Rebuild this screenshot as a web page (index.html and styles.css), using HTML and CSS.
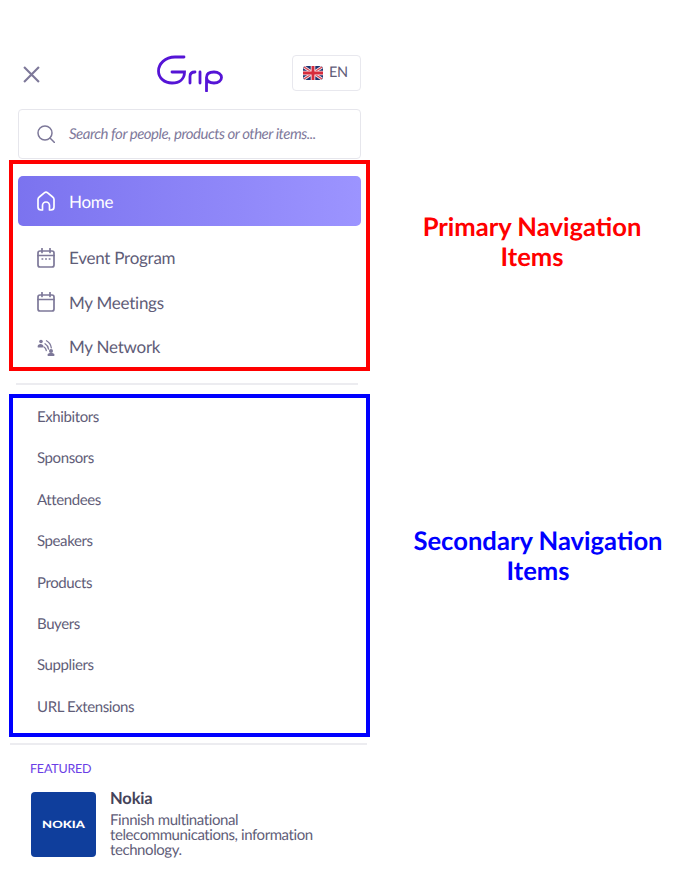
FILE: index.html
```html
<!DOCTYPE html>
<html lang="en">
<head>
<meta charset="utf-8">
<title>Grip navigation</title>
<link rel="stylesheet" href="styles.css">
</head>
<body>
<div class="page">
  <header class="top">
    <svg class="close" viewBox="0 0 16 16" width="17" height="17"><path d="M1 1l14 14M15 1L1 15"/></svg>
    <svg class="logo" viewBox="0 0 66 38" width="66" height="38" role="img" aria-label="Grip">
      <path d="M27 3H18C8 3 1.500 10 1.500 17C1.500 24 7.500 29 15 29C22.500 29 27.500 25 27.500 18H15"/>
      <path d="M33 29V22.500C33 19.500 35 18 38 18"/>
      <path d="M43 18V29"/>
      <path d="M49.500 37V23.500C49.500 20 52.500 18 57 18C61.500 18 64.500 20.500 64.500 23.500C64.500 26.500 61.500 29 57 29C53 29 50 27 49.500 24"/>
    </svg>
    <button class="lang">
      <svg class="flag" viewBox="0 0 20 14" width="20" height="14">
        <rect width="20" height="14" rx="3" fill="#1f3470"/>
        <path d="M1 1l18 12M19 1L1 13" stroke="#f6e4e8" stroke-width="3"/>
        <path d="M1 1l18 12M19 1L1 13" stroke="#d8414f" stroke-width="1.200"/>
        <path d="M10 0v14M0 7h20" stroke="#f6e4e8" stroke-width="4.600"/>
        <path d="M10 0v14M0 7h20" stroke="#d62c3c" stroke-width="2.800"/>
      </svg>
      <span>EN</span>
    </button>
  </header>

  <div class="search">
    <svg class="search-icon" viewBox="0 0 18 18" width="18" height="18"><circle cx="8" cy="8" r="7"/><path d="M13 13l4.500 4.500"/></svg>
    <span class="search-text">Search for people, products or other items...</span>
  </div>

  <div class="band">
    <nav class="primary">
      <a class="item home">
        <svg class="ico" viewBox="0 0 18 20" width="18" height="20"><path d="M5.500 19H4C2.300 19 1 17.700 1 16V8.500C1 7.500 1.500 6.600 2.300 6L7.300 1.800C8.300 1 9.700 1 10.700 1.800L15.700 6C16.500 6.600 17 7.500 17 8.500V16C17 17.700 15.700 19 14 19H12.500V14.500C12.500 12.600 11 11 9 11C7 11 5.500 12.600 5.500 14.500Z"/></svg>
        <span>Home</span>
      </a>
      <a class="item">
        <svg class="ico" viewBox="0 0 18 20" width="18" height="20"><rect x="1" y="3" width="16" height="16" rx="2"/><path d="M1 7.500h16M5 .5v4M13 .5v4"/><path class="dots" d="M4.500 11h1.800M8.100 11h1.800M11.700 11h1.800"/></svg>
        <span>Event Program</span>
      </a>
      <a class="item">
        <svg class="ico" viewBox="0 0 18 20" width="18" height="20"><rect x="1" y="3" width="16" height="16" rx="2"/><path d="M1 7.500h16M5 .5v4M13 .5v4"/></svg>
        <span>My Meetings</span>
      </a>
      <a class="item">
        <svg class="ico net" viewBox="0 -1 18 20" width="18" height="20">
          <circle cx="4" cy="3.500" r="1.800"/>
          <circle cx="14" cy="13" r="2"/>
          <path class="fill" d="M.6 8.800C.6 7 2 6 3.500 6C5 6 6.500 7 6.500 8.500C6.500 9 6 9.400 5.500 9.400H1.500C1 9.700 .6 9.400 .6 8.800Z"/>
          <path class="fill" d="M10.500 17C10.500 15.600 12 15 14 15C16 15 17.500 15.600 17.500 17C17.500 17.700 17 18 16.500 18H11.500C11 18 10.500 17.700 10.500 17Z"/>
          <path class="arc" d="M7 9C8.300 9.800 9 11 9.300 12.500M8 5.800C10 7 11.200 9 11.500 11M9.500 2.800C12.200 4.300 13.900 7 14.300 9.800"/>
        </svg>
        <span class="item-label">My Network</span>
      </a>
    </nav>
    <h2 class="note note-red">Primary Navigation Items</h2>
  </div>

  <hr class="rule rule-a">

  <div class="band">
    <nav class="secondary">
      <a>Exhibitors</a>
      <a>Sponsors</a>
      <a>Attendees</a>
      <a>Speakers</a>
      <a>Products</a>
      <a>Buyers</a>
      <a>Suppliers</a>
      <a>URL Extensions</a>
    </nav>
    <h2 class="note note-blue">Secondary Navigation Items</h2>
  </div>

  <hr class="rule rule-b">

  <section class="featured">
    <div class="featured-label">FEATURED</div>
    <div class="card">
      <div class="brand"><span class="brand-word">NOKIA</span></div>
      <div class="card-text">
        <div class="card-title">Nokia</div>
        <div class="card-desc">Finnish multinational telecommunications, information technology.</div>
      </div>
    </div>
  </section>
</div>
</body>
</html>
```

FILE: styles.css
```css
* { box-sizing: border-box; }
html, body { margin: 0; padding: 0; background: #fff; }
body { font-family: Lato, "Liberation Sans", sans-serif; color: #5f5d78; text-rendering: geometricPrecision; }
.page { width: 688px; height: 882px; padding-top: 55px; overflow: hidden; }

.top { display: flex; align-items: center; width: 338px; height: 36px; margin-left: 23px; }
.close { flex: none; fill: none; stroke: #7d7899; stroke-width: 2; margin-top: 2px; }
.logo { flex: none; fill: none; stroke: #5514d6; stroke-width: 2.800; stroke-linecap: round; margin: -1px 69px 0 117px; }
.lang { display: flex; align-items: center; gap: 6px; width: 69px; height: 36px; padding: 0 0 2px 10px; background: #fff; border: 1px solid #e8e8ee; border-radius: 4px; font: 14.500px Lato, sans-serif; letter-spacing: -.3px; color: #5f5d78; text-rendering: geometricPrecision; }
.flag { margin-top: 2px; }

.search { display: flex; align-items: center; gap: 14px; width: 343px; height: 50px; margin: 18px 0 1px 18px; padding-left: 18px; border: 1px solid #e6e6ec; border-radius: 4px; font-style: italic; font-size: 15px; letter-spacing: -.5px; color: #7f7a9c; white-space: nowrap; }
.search-icon { flex: none; fill: none; stroke: #7d7899; stroke-width: 1.500; stroke-linecap: round; }
.search-text { margin-top: -1px; }

.band { display: flex; margin-left: 9px; }
.primary { width: 361px; height: 211px; border: 4px solid #ff0000; padding: 12px 5px 0; display: flex; flex-direction: column; gap: 10.500px; flex: none; }
.item { display: flex; align-items: center; gap: 14px; flex: none; height: 34px; padding-left: 19px; font-size: 17px; letter-spacing: -.25px; color: #5f5d78; }
.ico { flex: none; fill: none; stroke: #7d7899; stroke-width: 1.700; stroke-linejoin: round; stroke-linecap: round; }
.dots { stroke-width: 1.300; stroke-linecap: butt; }
.net circle, .net .fill { fill: #7d7899; stroke: none; }
.net .arc { stroke-width: 1.300; }
.home { height: 50px; margin-bottom: 4px; background: linear-gradient(90deg, #7b73ef, #9c94ff); border-radius: 5px; color: #fff; }
.home .ico { stroke: #fff; }

.rule { height: 2px; border: 0; margin: 0; background: #ececf0; }
.rule-a { width: 342px; margin: 12px 0 9px 16px; }
.rule-b { width: 357px; margin: 6px 0 0 10px; }

.secondary { width: 361px; height: 343px; border: 4px solid #0000ff; padding: 7px 0 0 24px; display: flex; flex-direction: column; gap: 17.400px; flex: none; }
.secondary a { height: 24px; line-height: 24px; font-size: 15px; letter-spacing: -.4px; color: #5f5d78; }

.note { margin: 0; font-weight: 700; font-size: 25.600px; line-height: 30px; text-align: center; }
.note-red { color: #ff0000; width: 240px; margin: 52px 0 0 42px; }
.note-blue { color: #0000ff; width: 270px; margin: 132px 0 0 33px; }

.featured { padding: 15px 0 0 30px; }
.featured-label { font-size: 12.500px; letter-spacing: -.2px; line-height: 18px; color: #6a3ee6; }
.card { display: flex; gap: 14px; margin: 14px 0 0 1px; }
.brand { flex: none; display: flex; align-items: center; justify-content: center; width: 65px; height: 65px; background: #0f3e9c; border-radius: 4px; color: #fff; font-weight: 900; font-size: 10px; }
.brand-word { display: block; transform: scaleX(1.3); }
.card-text { width: 225px; margin-top: -4px; }
.card-title { font-size: 16.500px; letter-spacing: -.15px; font-weight: 700; line-height: 20px; color: #45435a; }
.card-desc { font-size: 15px; letter-spacing: -.42px; line-height: 15.200px; margin-top: 5px; color: #5f5d78; }
```
